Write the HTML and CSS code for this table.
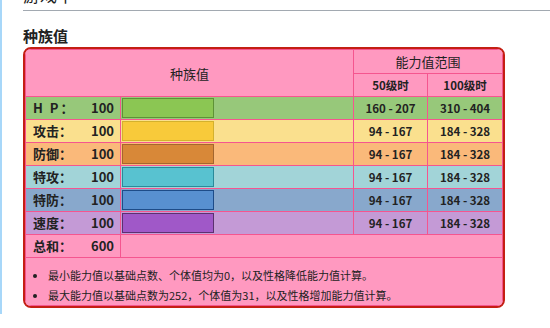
FILE: index.html
```html
<!DOCTYPE html>
<html lang="zh">
<head>
<meta charset="utf-8">
<title>种族值</title>
<link rel="stylesheet" href="styles.css">
</head>
<body>
<div class="page">
  <h2 class="section-title">游戏中</h2>
  <h3 class="sub-title">种族值</h3>
  <div class="stats-box">
    <table class="stats">
      <colgroup>
        <col class="c-name"><col class="c-bar"><col class="c-lv50"><col class="c-lv100">
      </colgroup>
      <thead>
        <tr class="head">
          <th colspan="2" rowspan="2" class="h-main">种族值</th>
          <th colspan="2" class="h-range">能力值范围</th>
        </tr>
        <tr class="head">
          <th class="h-lv">50级时</th>
          <th class="h-lv">100级时</th>
        </tr>
      </thead>
      <tbody>
        <tr class="row hp">
          <td class="name"><div class="name-in"><span class="lbl lbl-hp">H P：</span><span class="val">100</span></div></td>
          <td class="bar-cell"><div class="bar" style="width:40%"></div></td>
          <td class="range">160 - 207</td>
          <td class="range">310 - 404</td>
        </tr>
        <tr class="row atk">
          <td class="name"><div class="name-in"><span class="lbl">攻击：</span><span class="val">100</span></div></td>
          <td class="bar-cell"><div class="bar" style="width:40%"></div></td>
          <td class="range">94 - 167</td>
          <td class="range">184 - 328</td>
        </tr>
        <tr class="row def">
          <td class="name"><div class="name-in"><span class="lbl">防御：</span><span class="val">100</span></div></td>
          <td class="bar-cell"><div class="bar" style="width:40%"></div></td>
          <td class="range">94 - 167</td>
          <td class="range">184 - 328</td>
        </tr>
        <tr class="row spa">
          <td class="name"><div class="name-in"><span class="lbl">特攻：</span><span class="val">100</span></div></td>
          <td class="bar-cell"><div class="bar" style="width:40%"></div></td>
          <td class="range">94 - 167</td>
          <td class="range">184 - 328</td>
        </tr>
        <tr class="row spd">
          <td class="name"><div class="name-in"><span class="lbl">特防：</span><span class="val">100</span></div></td>
          <td class="bar-cell"><div class="bar" style="width:40%"></div></td>
          <td class="range">94 - 167</td>
          <td class="range">184 - 328</td>
        </tr>
        <tr class="row spe">
          <td class="name"><div class="name-in"><span class="lbl">速度：</span><span class="val">100</span></div></td>
          <td class="bar-cell"><div class="bar" style="width:40%"></div></td>
          <td class="range">94 - 167</td>
          <td class="range">184 - 328</td>
        </tr>
        <tr class="row total">
          <td class="name"><div class="name-in"><span class="lbl">总和：</span><span class="val">600</span></div></td>
          <td colspan="3" class="empty"></td>
        </tr>
        <tr class="row notes">
          <td colspan="4" class="notes-cell">
            <ul class="note-list">
              <li>最小能力值以基础点数、个体值均为0，以及性格降低能力值计算。</li>
              <li>最大能力值以基础点数为252，个体值为31，以及性格增加能力值计算。</li>
            </ul>
          </td>
        </tr>
      </tbody>
    </table>
  </div>
</div>
</body>
</html>
```
FILE: styles.css
```css
html, body {
  margin: 0;
  padding: 0;
  background: #ffffff;
}
body {
  font-family: "Noto Sans CJK SC", "Noto Sans", sans-serif;
  color: #222222;
  overflow: hidden;
}
.page {
  border-left: 2px solid #a7d7f9;
  padding-left: 21px;
  min-height: 328px;
  box-sizing: border-box;
}
.section-title {
  margin: -14px 0 0 0;
  font-size: 17px;
  line-height: 18px;
  font-weight: normal;
  padding-bottom: 6px;
  border-bottom: 1px solid #a2a9b1;
}
.sub-title {
  margin: 15px 0 1px 0;
  font-size: 15px;
  line-height: 20px;
  font-weight: bold;
}
.stats-box {
  width: 482px;
  box-sizing: border-box;
  border: 2px solid #c41f14;
  border-radius: 8px;
  overflow: hidden;
  background: #f5558f;
}
.stats {
  width: 478px;
  table-layout: fixed;
  border-collapse: separate;
  border-spacing: 1px;
  background: #f5558f;
}
.c-name { width: 94px; }
.c-bar { width: 232px; }
.c-lv50 { width: 73px; }
.c-lv100 { width: 74px; }
.stats th, .stats td {
  padding: 0;
  background: #ff99c0;
}
.head th {
  font-weight: normal;
  text-align: center;
}
.h-main {
  font-size: 13px;
}
.h-range {
  height: 23px;
  font-size: 13px;
}
.h-lv {
  height: 22px;
  font-size: 11.5px;
  font-weight: bold !important;
}
.row td {
  height: 22px;
}
.name-in {
  display: flex;
  justify-content: space-between;
  align-items: center;
  padding: 0 6px 0 7px;
  font-size: 13px;
  font-weight: bold;
  line-height: 22px;
}
.lbl-hp {
  letter-spacing: 2px;
}
.bar-cell {
  padding: 0 1px !important;
}
.bar {
  box-sizing: border-box;
  height: 20px;
  border: 1px solid;
}
.range {
  text-align: center;
  font-size: 11.5px;
  font-weight: bold;
}
.hp td { background: #97c87a; }
.hp .bar { background: #8bc653; border-color: #5e9236; }
.atk td { background: #fae08e; }
.atk .bar { background: #f8ca3a; border-color: #d4b12c; }
.def td { background: #fab97a; }
.def .bar { background: #d88838; border-color: #a4662e; }
.spa td { background: #a2d4d8; }
.spa .bar { background: #58c2d0; border-color: #2a8a9a; }
.spd td { background: #88a8cc; }
.spd .bar { background: #5890d0; border-color: #1e4c88; }
.spe td { background: #c49ad6; }
.spe .bar { background: #a058c8; border-color: #5c3070; }
.total td { background: #ff99c0; }
.notes-cell {
  height: 51px;
  vertical-align: top;
}
.note-list {
  margin: 0;
  padding: 7px 0 0 22px;
  font-size: 11px;
  line-height: 20px;
}
```
